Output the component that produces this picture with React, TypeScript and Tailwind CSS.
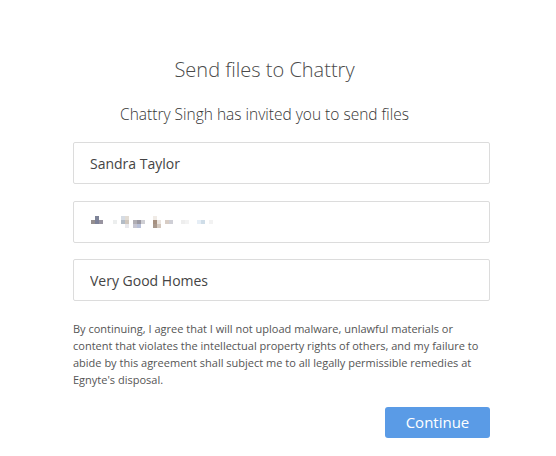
import { useState } from 'react';

const fieldClass =
  'h-[42px] w-full rounded-[2px] border border-[#dcdcdc] bg-white px-4 text-[14px] text-[#444] outline-none';

// pixelated email address, as it appears blurred out in the source
const emailCells: [number, number, string][] = [
  [6, 0, '#7e8498'],
  [32, 0, '#d6dce4'],
  [36, 0, '#e2dcd4'],
  [64, 0, '#f0ebe6'],
  [2, 1, '#958f8f'],
  [6, 1, '#7c8198'],
  [10, 1, '#9894a0'],
  [24, 1, '#eceeee'],
  [32, 1, '#b3bcc6'],
  [36, 1, '#cfc6bd'],
  [44, 1, '#b0aeb4'],
  [48, 1, '#9a98a2'],
  [52, 1, '#cfcfd4'],
  [64, 1, '#a69080'],
  [68, 1, '#ebe5e0'],
  [76, 1, '#d8cdc5'],
  [80, 1, '#cfcfd6'],
  [92, 1, '#eeeeee'],
  [96, 1, '#f3f3f3'],
  [108, 1, '#e6eef6'],
  [112, 1, '#cfdde8'],
  [120, 1, '#f2f2f2'],
  [36, 2, '#e8e8ec'],
  [44, 2, '#c6c6d2'],
  [48, 2, '#b8c0d8'],
  [64, 2, '#a8988c'],
  [68, 2, '#d4c8be'],
];

export default function App() {
  const [name, setName] = useState('Sandra Taylor');
  const [company, setCompany] = useState('Very Good Homes');

  return (
    <div className="min-h-[456px] w-[556px] bg-white font-['Open_Sans',sans-serif] text-[#444]">
      <div className="ml-[73px] w-[417px] pt-[56px]">
        <h1 className="pr-[34px] text-center text-[20px] font-light leading-[28px] text-[#4a4a4a]">Send files to Chattry</h1>
        <p className="mt-[19px] pr-[34px] text-center text-[15.5px] font-light leading-[22px] text-[#363636]">
          Chattry Singh has invited you to send files
        </p>

        <div className="mt-[17px] flex flex-col gap-[16.5px]">
          <input className={fieldClass} value={name} onChange={(e) => setName(e.target.value)} />
          <div className={`${fieldClass} flex items-center !px-[15px]`}>
            <svg width="128" height="12" viewBox="0 0 128 12" className="blur-[0.4px]">
              {emailCells.map(([x, row, fill]) => (
                <rect key={`${x}-${row}`} x={x} y={row * 4} width="4" height="4" fill={fill} />
              ))}
            </svg>
          </div>
          <input className={fieldClass} value={company} onChange={(e) => setCompany(e.target.value)} />
        </div>

        <p className="mt-[18.5px] text-[11px] leading-[17px] text-[#555]">
          By continuing, I agree that I will not upload malware, unlawful materials or content that violates the
          intellectual property rights of others, and my failure to abide by this agreement shall subject me to all
          legally permissible remedies at Egnyte's disposal.
        </p>

        <div className="mt-[19px] flex justify-end">
          <button
            type="button"
            className="h-[31px] w-[105px] rounded-[3px] bg-[#5a9be6] text-[15px] leading-none text-white"
          >
            Continue
          </button>
        </div>
      </div>
    </div>
  );
}
